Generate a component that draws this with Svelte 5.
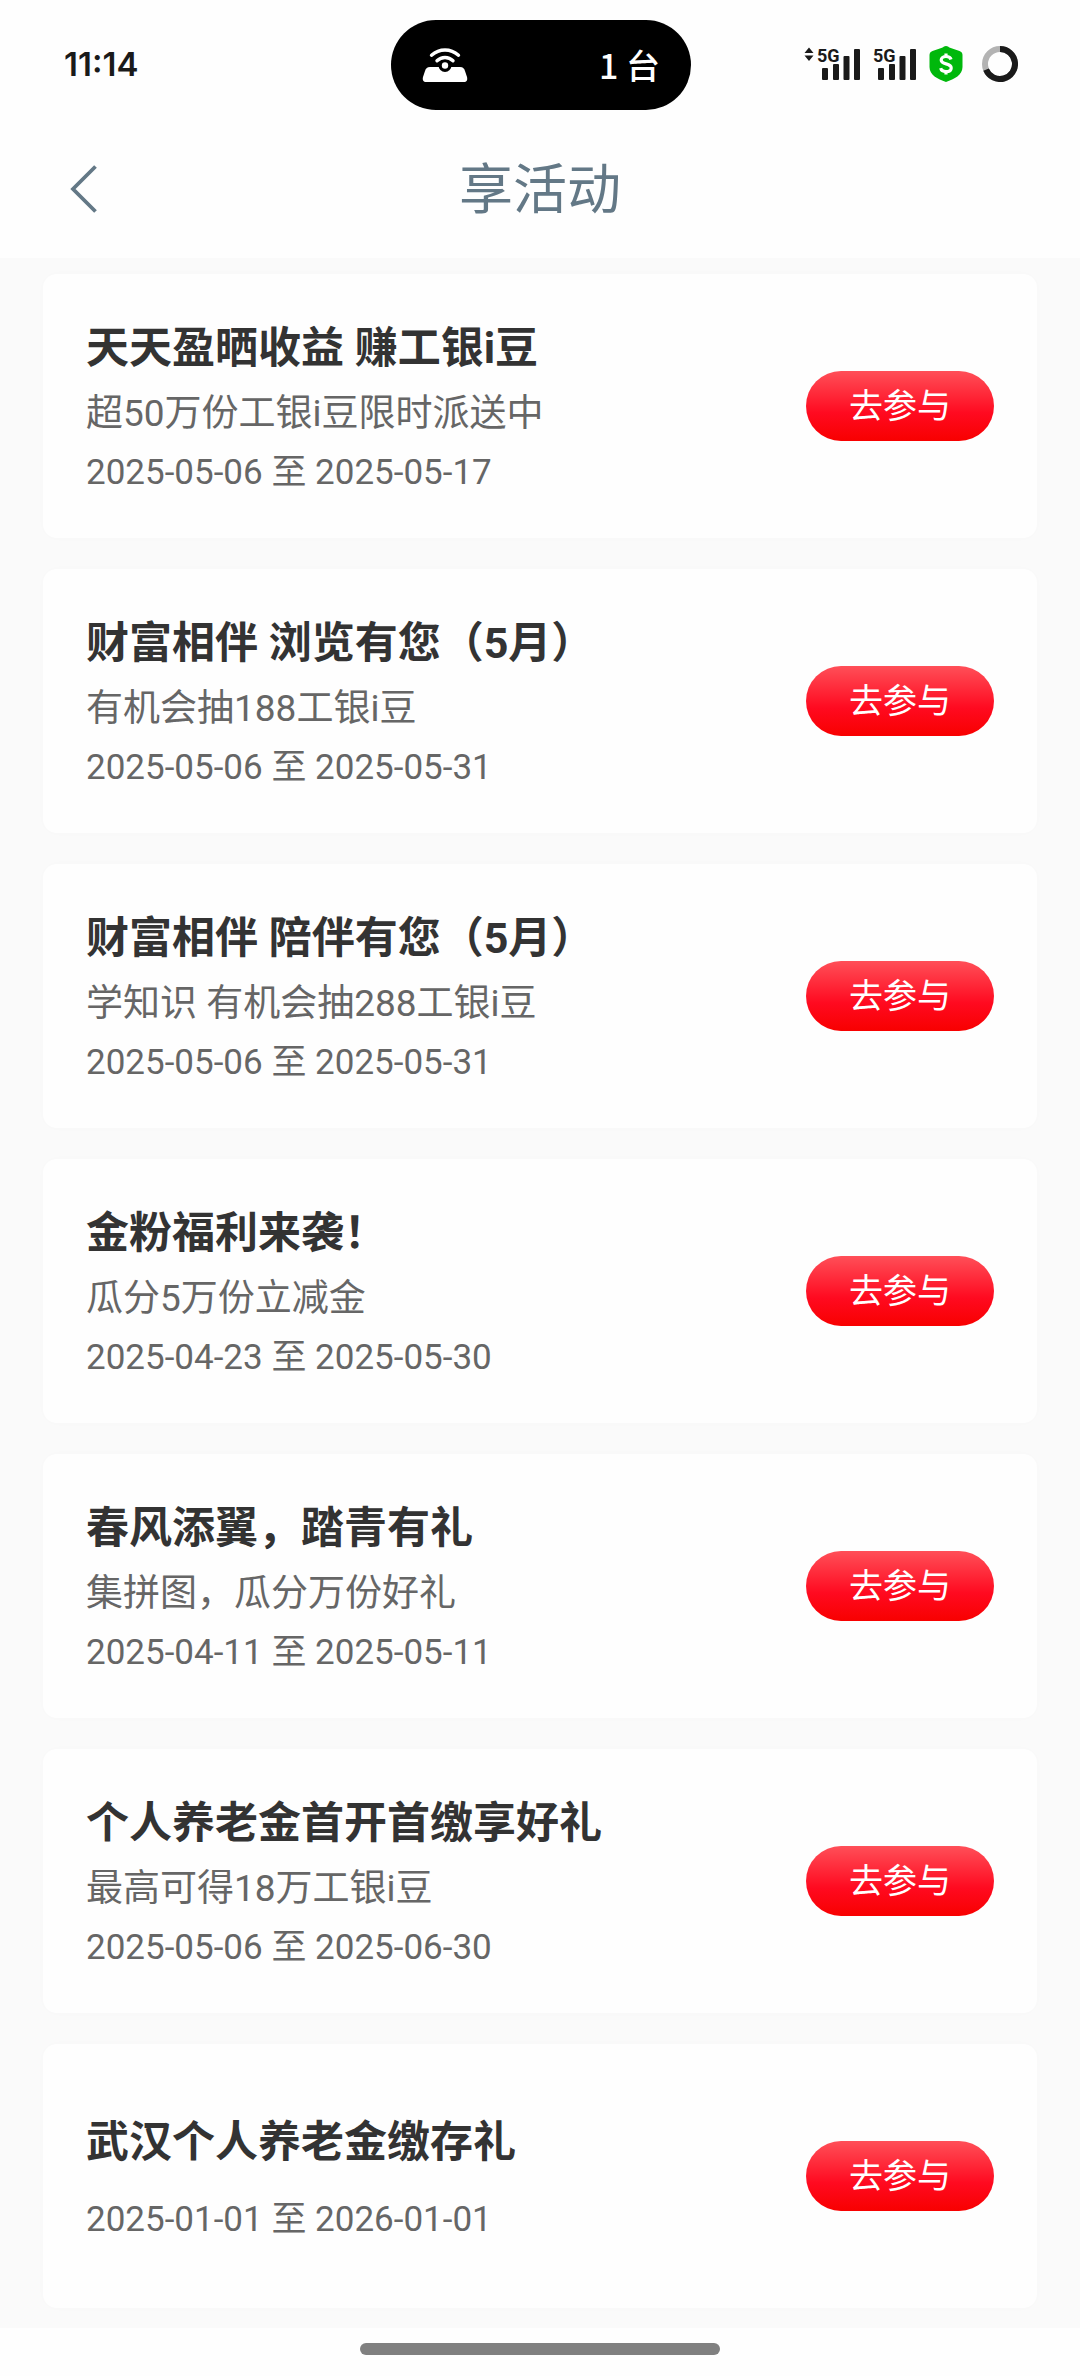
<script lang="ts">
    interface Activity {
        title: string;
        desc?: string;
        start: string;
        end: string;
    }

    const activities: Activity[] = [
        { title: '天天盈晒收益 赚工银i豆', desc: '超50万份工银i豆限时派送中', start: '2025-05-06', end: '2025-05-17' },
        { title: '财富相伴 浏览有您（5月）', desc: '有机会抽188工银i豆', start: '2025-05-06', end: '2025-05-31' },
        { title: '财富相伴 陪伴有您（5月）', desc: '学知识 有机会抽288工银i豆', start: '2025-05-06', end: '2025-05-31' },
        { title: '金粉福利来袭！', desc: '瓜分5万份立减金', start: '2025-04-23', end: '2025-05-30' },
        { title: '春风添翼，踏青有礼', desc: '集拼图，瓜分万份好礼', start: '2025-04-11', end: '2025-05-11' },
        { title: '个人养老金首开首缴享好礼', desc: '最高可得18万工银i豆', start: '2025-05-06', end: '2025-06-30' },
        { title: '武汉个人养老金缴存礼', start: '2025-01-01', end: '2026-01-01' },
    ];
</script>

{#snippet signal(arrows: boolean)}
    <svg class="signal" width={arrows ? 57 : 44} height="36" viewBox={arrows ? '-13 0 57 36' : '0 0 44 36'} aria-hidden="true">
        {#if arrows}
            <path d="M-8 1.500l4.500 5.500h-9zM-8 15l4.500-5.500h-9z" />
        {/if}
        <text x="0" y="16">5G</text>
        <rect x="5" y="22" width="6" height="12" rx="1" />
        <rect x="16" y="18" width="6" height="16" rx="1" />
        <rect x="26.5" y="10" width="6" height="24" rx="1" />
        <rect x="37" y="3" width="6" height="31" rx="1" />
    </svg>
{/snippet}

<div class="page" lang="zh-CN">
    <div class="status-bar">
        <span class="time">11:14</span>
        <div class="island">
            <svg width="46" height="36" viewBox="0 0 46 36" aria-hidden="true">
                <path d="M8 20h30c3 0 4 1.500 5 4l2 6c.8 3-.5 5-3 5H4c-2.500 0-3.800-2-3-5l2-6c1-2.500 2-4 5-4z" fill="#fff" />
                <circle cx="23" cy="18.500" r="6.500" fill="#000" />
                <circle cx="23" cy="18.500" r="3.200" fill="#fff" />
                <path d="M9.500 8.200c8-7 19-7 27 0M15 13.800c4.500-4.500 11.500-4.500 16 0" fill="none" stroke="#fff" stroke-width="3.400" stroke-linecap="round" />
            </svg>
            <span class="devices">1 台</span>
        </div>
        <div class="indicators">
            {@render signal(true)}
            {@render signal(false)}
            <svg class="shield" width="34" height="36" viewBox="0 0 34 36" aria-hidden="true">
                <path d="M17 0c1.500 0 2.500 1 4 1.800L30.500 5C32.500 5.700 33.500 7 33.500 9v12c0 8-8 12-16.500 15C8.500 33 .5 29 .5 21V9c0-2 1-3.300 3-4L13 1.800C14.500 1 15.500 0 17 0z" fill="#00b80c" />
                <path d="M22 13.500c-.5-2-2.500-3-5-3-2.800 0-4.800 1.400-4.800 3.600 0 5 10 2.600 10 7.800 0 2.300-2.200 3.700-5.200 3.700-2.800 0-4.800-1.200-5.300-3.400M17 7.500v3M17 25.500v3" fill="none" stroke="#fff" stroke-width="3.200" />
            </svg>
            <svg width="36" height="36" viewBox="0 0 36 36" aria-hidden="true">
                <circle cx="18" cy="18" r="15" fill="none" stroke="#b3b3b3" stroke-width="6" />
                <path d="M18 3a15 15 0 1 1-13.900 20.600" fill="none" stroke="#1a1a1a" stroke-width="6" />
            </svg>
        </div>
    </div>

    <header class="nav">
        <button class="back" aria-label="返回">
            <svg width="28" height="50" viewBox="0 0 28 50" aria-hidden="true">
                <path d="M25.500 2.500L3 25l22.500 22.500" fill="none" stroke="#637886" stroke-width="3.800" />
            </svg>
        </button>
        <h1>享活动</h1>
    </header>

    <main class="list">
        {#each activities as item}
            <section class="card">
                <div class="info" class:no-desc={!item.desc}>
                    <h2>{item.title}</h2>
                    {#if item.desc}
                        <p class="desc">{item.desc}</p>
                    {/if}
                    <p class="date">{item.start} 至 {item.end}</p>
                </div>
                <button class="join">去参与</button>
            </section>
        {/each}
    </main>

    <div class="home-area">
        <div class="home-indicator"></div>
    </div>
</div>

<style>
    :global(body) {
        background: #fefefe;
    }

    .page {
        display: flex;
        flex-direction: column;
        min-height: 100vh;
        font-family: Roboto, 'Noto Sans CJK SC', sans-serif;
        color: #333;
    }

    h1,
    h2,
    p {
        margin: 0;
        font-weight: 400;
    }

    button {
        border: none;
        font-family: inherit;
        cursor: pointer;
    }

    .status-bar {
        display: grid;
        grid-template-columns: 1fr 300px 1fr;
        align-items: center;
        padding: 20px 62px 10px 64px;
    }
    .time,
    .devices,
    .indicators {
        padding-bottom: 2px;
    }
    .time {
        font-family: Inter, sans-serif;
        font-size: 33px;
        font-weight: 600;
        line-height: 40px;
        color: #1a1a1a;
    }
    .island {
        display: flex;
        align-items: center;
        justify-content: space-between;
        height: 90px;
        padding: 0 31px;
        box-sizing: border-box;
        border-radius: 45px;
        background: #000;
        color: #fff;
        font-family: 'Noto Sans CJK SC', sans-serif;
        font-size: 34px;
        font-weight: 500;
    }
    .indicators {
        display: flex;
        align-items: center;
        justify-content: flex-end;
    }
    .signal {
        margin-right: 12px;
        fill: #1a1a1a;
        font-family: Roboto, sans-serif;
        font-size: 18px;
        font-weight: 700;
    }
    .shield {
        margin-right: 19px;
    }

    .nav {
        display: grid;
        grid-template-columns: 1fr auto 1fr;
        align-items: center;
        height: 138px;
        padding: 0 70px;
    }
    .back {
        display: flex;
        justify-self: start;
        padding: 0;
        background: none;
    }
    h1 {
        padding-top: 3px;
        font-size: 54px;
        line-height: 80px;
        color: #637886;
    }

    .list {
        display: flex;
        flex: 1;
        flex-direction: column;
        gap: 31px;
        padding: 16px 43px 20px;
        background: #fafafa;
    }
    .card {
        display: flex;
        align-items: center;
        justify-content: space-between;
        height: 264px;
        padding: 0 43px;
        border-radius: 14px;
        background: #fefefe;
        box-shadow: 0 0 14px rgba(0, 0, 0, 0.01);
    }
    .info {
        display: flex;
        flex-direction: column;
        gap: 10px;
        padding-top: 2px;
    }
    .info.no-desc {
        gap: 25px;
    }
    h2 {
        font-size: 43px;
        font-weight: 700;
        line-height: 60px;
    }
    .desc {
        font-size: 37px;
        line-height: 52px;
        color: #666;
    }
    .date {
        font-size: 35px;
        line-height: 46px;
        color: #666;
    }
    .join {
        width: 188px;
        height: 70px;
        padding: 0;
        border-radius: 35px;
        background: linear-gradient(#ff4f58, #ff0a20 60%, #f80000);
        color: #fff;
        font-size: 34px;
        line-height: 50px;
    }

    .home-area {
        display: flex;
        justify-content: center;
        padding: 15px 0 21px;
    }
    .home-indicator {
        width: 360px;
        height: 12px;
        border-radius: 6px;
        background: #808080;
    }
</style>
